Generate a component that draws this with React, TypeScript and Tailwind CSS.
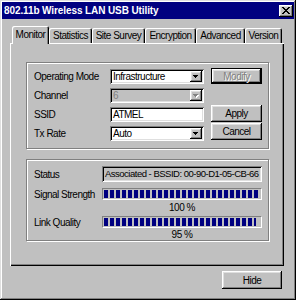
import React from "react";

const raised =
  "shadow-[inset_-1px_-1px_#000,inset_1px_1px_#fff,inset_-2px_-2px_#808080,inset_2px_2px_#dfdfdf]";
const sunken =
  "shadow-[inset_1px_1px_#808080,inset_-1px_-1px_#fff,inset_2px_2px_#000,inset_-2px_-2px_#dfdfdf]";
const etched = "border border-[#808080] shadow-[inset_1px_1px_#fff,1px_1px_#fff]";

function Arrow({ disabled }: { disabled?: boolean }) {
  return (
    <svg width="6" height="4" viewBox="0 0 6 4" className="block">
      {disabled && (
        <g fill="#fff">
          <rect x="1" y="1" width="5" height="1" />
          <rect x="2" y="2" width="3" height="1" />
          <rect x="3" y="3" width="1" height="1" />
        </g>
      )}
      <g fill={disabled ? "#808080" : "#000"}>
        <rect x="0" y="0" width="5" height="1" />
        <rect x="1" y="1" width="3" height="1" />
        <rect x="2" y="2" width="1" height="1" />
      </g>
    </svg>
  );
}

function Combo({ value, disabled }: { value: string; disabled?: boolean }) {
  return (
    <div
      className={`flex h-[15px] w-[94px] p-[2px] ${sunken} ${
        disabled ? "bg-[#c0c0c0] text-[#808080]" : "bg-white text-black"
      }`}
    >
      <div className="flex-1 pl-[1px] leading-[11px] overflow-hidden whitespace-nowrap">{value}</div>
      <div className={`w-[12px] h-full flex items-center justify-center bg-[#c0c0c0] ${raised}`}>
        <Arrow disabled={disabled} />
      </div>
    </div>
  );
}

function TextField({ value }: { value: string }) {
  return (
    <div className={`h-[15px] w-[94px] p-[2px] bg-white ${sunken}`}>
      <div className="pl-[1px] leading-[11px]">{value}</div>
    </div>
  );
}

function Button({ label, className, disabled, isDefault }: any) {
  return (
    <div
      className={`flex items-center justify-center bg-[#c0c0c0] ${
        isDefault ? "border border-black" : ""
      } ${className}`}
    >
      <div className={`w-full h-full flex items-center justify-center ${raised}`}>
        <span
          className={
            disabled ? "text-[#808080] [text-shadow:1px_1px_0_#fff]" : "text-black"
          }
        >
          {label}
        </span>
      </div>
    </div>
  );
}

function Meter({ fill }: { fill: string }) {
  return (
    <div className="h-[12px] w-[160px] border border-t-[#808080] border-l-[#808080] border-b-white border-r-white p-[1px]">
      <div
        className={`h-full ${fill} bg-[repeating-linear-gradient(90deg,#000080_0_4px,transparent_4px_6px)]`}
      />
    </div>
  );
}

const tabs = [
  { name: "Monitor", w: "w-[37px] ml-[2px]" },
  { name: "Statistics", w: "w-[43px]" },
  { name: "Site Survey", w: "w-[53px]" },
  { name: "Encryption", w: "w-[51px]" },
  { name: "Advanced", w: "w-[49px]" },
  { name: "Version", w: "w-[37px]" },
];

export default function App() {
  return (
    <div className="w-[296px] h-[300px] bg-[#c0c0c0] p-[2px] flex flex-col font-['Liberation_Sans',Arial,sans-serif] text-[10px] tracking-[-0.5px] text-black shadow-[inset_-1px_-1px_#000,inset_1px_1px_#dfdfdf,inset_-2px_-2px_#808080,inset_2px_2px_#fff]">
      {/* Title bar */}
      <div className="h-[17px] bg-[#000080] flex items-center justify-between pl-[2px]">
        <span className="text-white font-bold tracking-[-0.1px]">802.11b Wireless LAN USB Utility</span>
        <div className={`w-[14px] h-[12px] mr-[1px] bg-[#c0c0c0] flex items-center justify-center ${raised}`}>
          <svg width="8" height="7" viewBox="0 0 8 7" className="block">
            <g fill="#000">
              <rect x="0" y="0" width="2" height="1" />
              <rect x="6" y="0" width="2" height="1" />
              <rect x="1" y="1" width="2" height="1" />
              <rect x="5" y="1" width="2" height="1" />
              <rect x="2" y="2" width="4" height="1" />
              <rect x="3" y="3" width="2" height="1" />
              <rect x="2" y="4" width="4" height="1" />
              <rect x="1" y="5" width="2" height="1" />
              <rect x="5" y="5" width="2" height="1" />
              <rect x="0" y="6" width="2" height="1" />
              <rect x="6" y="6" width="2" height="1" />
            </g>
          </svg>
        </div>
      </div>

      <div className="ml-[8px] mt-[7px] w-[274px]">
        {/* Tabs */}
        <div className="flex items-end h-[17px]">
          {tabs.map((t, i) => (
            <div
              key={t.name}
              className={`${t.w} flex items-center justify-center bg-[#c0c0c0] rounded-t-[2px] shadow-[inset_1px_1px_#fff,inset_-1px_0_#000,inset_-2px_0_#808080] ${
                i === 0 ? "h-[18px] mb-[-1px] relative z-10 pb-[2px]" : "h-[15px]"
              }`}
            >
              {t.name}
            </div>
          ))}
        </div>

        {/* Panel */}
        <div className="h-[223px] bg-[#c0c0c0] pt-[19px] pl-[16px] shadow-[inset_1px_1px_#fff,inset_-1px_-1px_#000,inset_-2px_-2px_#808080]">
          <div className={`w-[243px] h-[87px] flex ${etched}`}>
            <div className="pl-[7px] pt-[6px] flex flex-col gap-[4px]">
              <div className="flex items-center">
                <span className="w-[76px]">Operating Mode</span>
                <Combo value="Infrastructure" />
              </div>
              <div className="flex items-center">
                <span className="w-[76px]">Channel</span>
                <Combo value="6" disabled />
              </div>
              <div className="flex items-center">
                <span className="w-[76px]">SSID</span>
                <TextField value="ATMEL" />
              </div>
              <div className="flex items-center">
                <span className="w-[76px]">Tx Rate</span>
                <Combo value="Auto" />
              </div>
            </div>
            <div className="ml-[7px] pt-[5px] flex flex-col">
              <Button label="Modify" disabled isDefault className="w-[51px] h-[16px]" />
              <Button label="Apply" className="w-[51px] h-[17px] mt-[21px]" />
              <Button label="Cancel" className="w-[51px] h-[17px] mt-[1px]" />
            </div>
          </div>

          <div className={`w-[243px] h-[82px] mt-[10px] pl-[7px] pt-[6px] grid grid-cols-[68px_160px] ${etched}`}>
            <span className="h-[16px] flex items-center">Status</span>
            <div className={`h-[16px] px-[3px] flex items-center overflow-hidden whitespace-nowrap text-[9.5px] tracking-[-0.5px] ${sunken}`}>
              Associated - BSSID: 00-90-D1-05-CB-66
            </div>

            <span className="h-[12px] mt-[6px] flex items-center">Signal Strength</span>
            <div className="mt-[6px]">
              <Meter fill="w-[154px]" />
            </div>
            <span />
            <div className="h-[14px] flex items-center justify-center">100 %</div>

            <span className="h-[12px] mt-[2px] flex items-center">Link Quality</span>
            <div className="mt-[2px]">
              <Meter fill="w-[152px]" />
            </div>
            <span />
            <div className="h-[12px] flex items-center justify-center">95 %</div>
          </div>
        </div>
      </div>

      <div className="self-end mr-[12px] mt-[5px]">
        <Button label="Hide" className="w-[60px] h-[18px]" />
      </div>
    </div>
  );
}
